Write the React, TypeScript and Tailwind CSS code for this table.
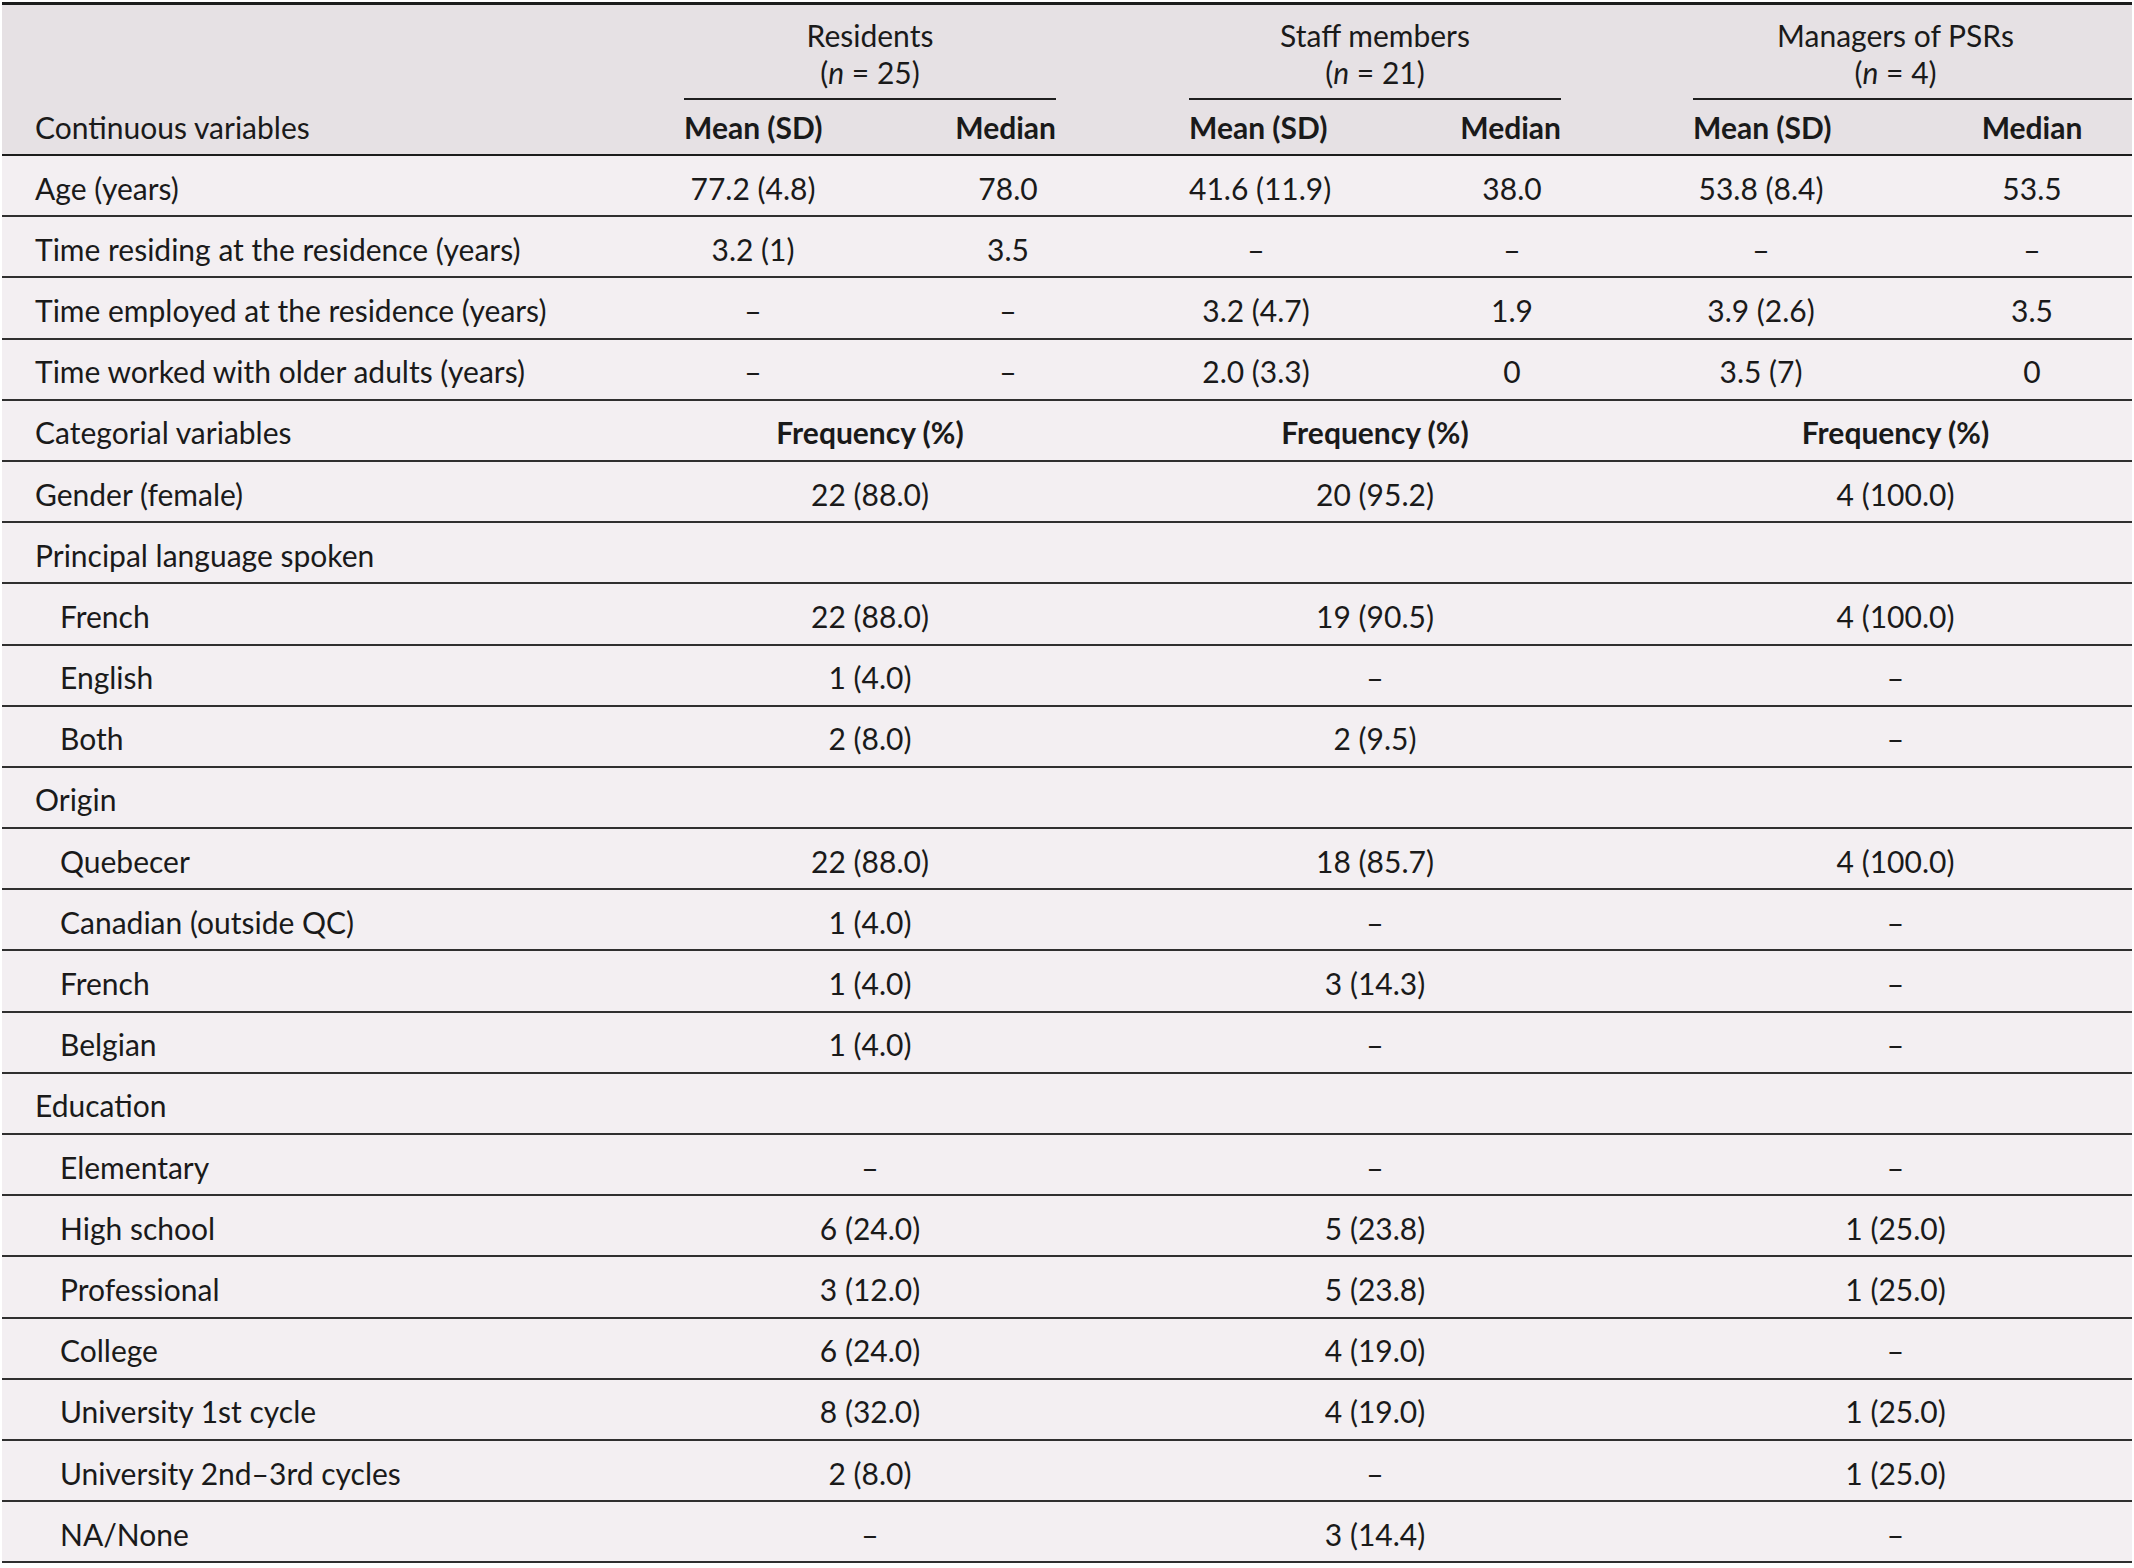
import React from "react";

// shared column tracks for every row of the table
const GRID =
  "grid grid-cols-[682px_138px_126px_120px_121px_134px_129px_120px_121px_136px_143px_120px_40px]";

const continuous: string[][] = [
  ["Age (years)", "77.2 (4.8)", "78.0", "41.6 (11.9)", "38.0", "53.8 (8.4)", "53.5"],
  ["Time residing at the residence (years)", "3.2 (1)", "3.5", "–", "–", "–", "–"],
  ["Time employed at the residence (years)", "–", "–", "3.2 (4.7)", "1.9", "3.9 (2.6)", "3.5"],
  ["Time worked with older adults (years)", "–", "–", "2.0 (3.3)", "0", "3.5 (7)", "0"],
];

type Cat = { label: string; sub?: boolean; r?: string; s?: string; m?: string };

const categorical: Cat[] = [
  { label: "Gender (female)", r: "22 (88.0)", s: "20 (95.2)", m: "4 (100.0)" },
  { label: "Principal language spoken" },
  { label: "French", sub: true, r: "22 (88.0)", s: "19 (90.5)", m: "4 (100.0)" },
  { label: "English", sub: true, r: "1 (4.0)", s: "–", m: "–" },
  { label: "Both", sub: true, r: "2 (8.0)", s: "2 (9.5)", m: "–" },
  { label: "Origin" },
  { label: "Quebecer", sub: true, r: "22 (88.0)", s: "18 (85.7)", m: "4 (100.0)" },
  { label: "Canadian (outside QC)", sub: true, r: "1 (4.0)", s: "–", m: "–" },
  { label: "French", sub: true, r: "1 (4.0)", s: "3 (14.3)", m: "–" },
  { label: "Belgian", sub: true, r: "1 (4.0)", s: "–", m: "–" },
  { label: "Education" },
  { label: "Elementary", sub: true, r: "–", s: "–", m: "–" },
  { label: "High school", sub: true, r: "6 (24.0)", s: "5 (23.8)", m: "1 (25.0)" },
  { label: "Professional", sub: true, r: "3 (12.0)", s: "5 (23.8)", m: "1 (25.0)" },
  { label: "College", sub: true, r: "6 (24.0)", s: "4 (19.0)", m: "–" },
  { label: "University 1st cycle", sub: true, r: "8 (32.0)", s: "4 (19.0)", m: "1 (25.0)" },
  { label: "University 2nd–3rd cycles", sub: true, r: "2 (8.0)", s: "–", m: "1 (25.0)" },
  { label: "NA/None", sub: true, r: "–", s: "3 (14.4)", m: "–" },
];

function Row({ children }: { children: React.ReactNode }) {
  return (
    <div className={`${GRID} h-[61.2px] items-center border-b-2 border-[#2f2f2f] pt-[5px]`}>
      {children}
    </div>
  );
}

export default function App() {
  return (
    <div className="min-h-screen bg-white pt-[2px] pl-[2px] font-['Lato','Liberation_Sans',sans-serif] text-[30px] whitespace-nowrap text-[#1a1a1a]">
      <div className="w-[2130px] bg-[#f3eff2]">
        {/* header */}
        <div className="border-t-[3px] border-b-2 border-[#1c1c1c] bg-[#e6e1e4]">
          <div className={`${GRID} pt-[12px]`}>
            <div className="col-start-2 col-span-3">
              <div className="pr-[12px] text-center leading-[37px]">
                <div>Residents</div>
                <div>
                  (<i>n</i> = 25)
                </div>
              </div>
              <div className="mt-[7px] mr-[12px] h-[2px] bg-[#1f1f1f]" />
            </div>
            <div className="col-start-6 col-span-3">
              <div className="pr-[11px] text-center leading-[37px]">
                <div>Staff members</div>
                <div>
                  (<i>n</i> = 21)
                </div>
              </div>
              <div className="mt-[7px] mr-[11px] h-[2px] bg-[#1f1f1f]" />
            </div>
            <div className="col-start-10 col-span-4">
              <div className="pr-[34px] text-center leading-[37px]">
                <div>Managers of PSRs</div>
                <div>
                  (<i>n</i> = 4)
                </div>
              </div>
              <div className="mt-[7px] h-[2px] bg-[#1f1f1f]" />
            </div>
          </div>
          <div className={`${GRID} h-[54px] items-center`}>
            <div className="pl-[33px]">Continuous variables</div>
            <div className="font-bold">Mean (SD)</div>
            <div className="col-start-4 pr-[12px] text-right font-bold">Median</div>
            <div className="col-start-6 font-bold">Mean (SD)</div>
            <div className="col-start-8 pr-[11px] text-right font-bold">Median</div>
            <div className="col-start-10 font-bold">Mean (SD)</div>
            <div className="col-start-12 text-center font-bold">Median</div>
          </div>
        </div>

        {/* continuous rows */}
        {continuous.map((r) => (
          <Row key={r[0]}>
            <div className="pl-[33px]">{r[0]}</div>
            <div className="text-center">{r[1]}</div>
            <div className="col-start-4 text-center">{r[2]}</div>
            <div className="col-start-6 text-center">{r[3]}</div>
            <div className="col-start-8 text-center">{r[4]}</div>
            <div className="col-start-10 text-center">{r[5]}</div>
            <div className="col-start-12 text-center">{r[6]}</div>
          </Row>
        ))}

        <Row>
          <div className="pl-[33px]">Categorial variables</div>
          <div className="col-start-2 col-span-3 pr-[12px] text-center font-bold">Frequency (%)</div>
          <div className="col-start-6 col-span-3 pr-[11px] text-center font-bold">Frequency (%)</div>
          <div className="col-start-10 col-span-4 pr-[34px] text-center font-bold">Frequency (%)</div>
        </Row>

        {/* categorical rows */}
        {categorical.map((c, i) => (
          <Row key={i}>
            <div className={c.sub ? "pl-[58px]" : "pl-[33px]"}>{c.label}</div>
            <div className="col-start-2 col-span-3 pr-[12px] text-center">{c.r}</div>
            <div className="col-start-6 col-span-3 pr-[11px] text-center">{c.s}</div>
            <div className="col-start-10 col-span-4 pr-[34px] text-center">{c.m}</div>
          </Row>
        ))}
      </div>
    </div>
  );
}
